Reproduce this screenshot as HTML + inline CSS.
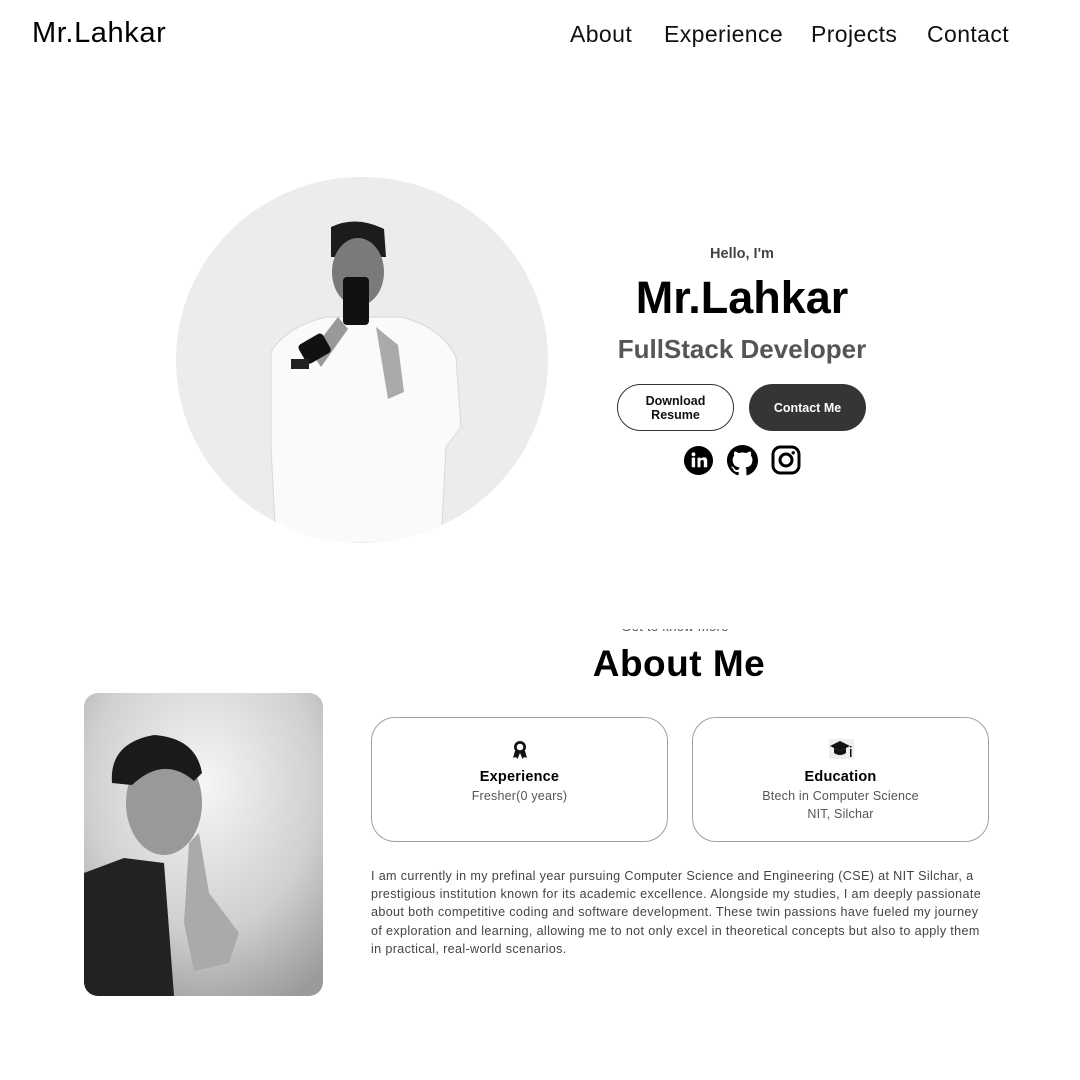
<!DOCTYPE html>
<html><head><meta charset="utf-8"><style>
*{margin:0;padding:0;box-sizing:border-box}
body{width:1080px;height:1080px;background:#fff;font-family:"Liberation Sans",sans-serif;color:#000;position:relative;overflow:hidden}
.abs{position:absolute}
.logo{left:32px;top:17px;font-size:29px;letter-spacing:.6px}
.nav{top:21px;font-size:23px;color:#111;letter-spacing:.4px}
.btn{position:absolute;top:384px;height:47px;width:117px;border-radius:24px;font-size:12.5px;font-weight:bold;display:flex;align-items:center;justify-content:center;text-align:center;line-height:14px}
.card{position:absolute;top:717px;height:125px;width:297px;border:1px solid #a0a0a0;border-radius:24px;text-align:center}
.card h3{font-size:14.5px;font-weight:bold;margin-top:51px;letter-spacing:.2px}
.card p{font-size:12.5px;color:#555;line-height:18px;margin-top:2px;letter-spacing:.2px}
</style></head><body>
<div class="abs logo">Mr.Lahkar</div>
<div class="abs nav" style="left:570px">About</div>
<div class="abs nav" style="left:664px">Experience</div>
<div class="abs nav" style="left:811px">Projects</div>
<div class="abs nav" style="left:927px">Contact</div>

<svg class="abs" style="left:176px;top:177px" width="372" height="366" viewBox="0 0 372 366">
<defs><clipPath id="c"><ellipse cx="186" cy="183" rx="186" ry="183"/></clipPath></defs>
<ellipse cx="186" cy="183" rx="186" ry="183" fill="#ececec"/>
<g clip-path="url(#c)">
<path d="M95 175 Q110 150 150 140 L225 140 Q265 150 280 180 L285 250 L270 270 L265 366 L100 366 L95 270 Z" fill="#fafafa" stroke="#d8d8d8"/>
<path d="M155 50 Q180 38 208 52 L210 80 L155 80 Z" fill="#1c1c1c"/>
<ellipse cx="182" cy="95" rx="26" ry="34" fill="#7a7a7a"/>
<rect x="167" y="100" width="26" height="48" rx="4" fill="#111"/>
<path d="M135 175 L162 140 L172 152 L145 190 Z" fill="#999"/>
<path d="M200 150 L222 168 L228 215 L212 222 Z" fill="#aaa"/>
<rect x="125" y="160" width="28" height="22" rx="4" transform="rotate(-30 140 172)" fill="#111"/>
<rect x="115" y="182" width="18" height="10" fill="#222"/>
</g></svg>

<div class="abs" style="left:0;width:1484px;top:246px;text-align:center;font-size:14.5px;font-weight:bold;color:#444">Hello, I'm</div>
<div class="abs" style="left:0;width:1484px;top:272px;text-align:center;font-size:45px;font-weight:bold">Mr.Lahkar</div>
<div class="abs" style="left:0;width:1484px;top:334px;text-align:center;font-size:26px;font-weight:bold;color:#555">FullStack Developer</div>
<div class="btn" style="left:617px;border:1.5px solid #333;color:#111">Download<br>Resume</div>
<div class="btn" style="left:749px;background:#353535;color:#fff">Contact Me</div>

<svg class="abs" style="left:683px;top:445px" width="31" height="31" viewBox="0 0 32 32"><circle cx="16" cy="16" r="15" fill="#000"/><rect x="9" y="13" width="3.5" height="10" fill="#fff"/><circle cx="10.8" cy="9.6" r="2" fill="#fff"/><path d="M15 13h3.3v1.5c.7-1.2 2-1.8 3.4-1.8 2.6 0 3.3 1.7 3.3 4.2V23h-3.5v-5.5c0-1.3-.4-2.2-1.6-2.2-1.3 0-1.9.9-1.9 2.2V23H15z" fill="#fff"/></svg>
<svg class="abs" style="left:727px;top:445px" width="31" height="31" viewBox="0 0 16 16"><path fill="#000" d="M8 0C3.58 0 0 3.580 0 8c0 3.54 2.29 6.53 5.47 7.590.4.07.55-.17.55-.38v-1.34c-2.230.48-2.7-1.07-2.7-1.07-.36-.92-.89-1.17-.89-1.17-.73-.5.06-.49.06-.49.8.06 1.230.83 1.230.83.72 1.23 1.88.87 2.34.67.07-.52.28-.87.51-1.07-1.78-.2-3.64-.89-3.64-3.95 0-.87.31-1.59.82-2.15-.08-.2-.36-1.02.08-2.12 0 0 .67-.21 2.2.82a7.6 7.6 0 0 1 4 0c1.53-1.04 2.2-.82 2.2-.82.44 1.1.16 1.92.08 2.12.51.56.82 1.27.82 2.15 0 3.07-1.87 3.75-3.65 3.95.29.25.54.73.54 1.48v2.2c0 .21.15.46.55.38A8 8 0 0 0 16 8c0-4.42-3.58-8-8-8z"/></svg>
<svg class="abs" style="left:771px;top:445px" width="30" height="30" viewBox="0 0 30 30"><rect x="2" y="2" width="26" height="26" rx="7.5" fill="none" stroke="#000" stroke-width="3"/><circle cx="15" cy="15" r="6" fill="none" stroke="#000" stroke-width="3"/><circle cx="22.2" cy="7.8" r="1.7" fill="#000"/></svg>

<div class="abs" style="left:0;width:1350px;top:629px;height:6px;overflow:hidden;text-align:center;font-size:13px;color:#555;letter-spacing:.3px"><div style="margin-top:-10px">Get to know more</div></div>
<div class="abs" style="left:0;width:1358px;top:643px;text-align:center;font-size:37px;font-weight:bold;letter-spacing:.5px">About Me</div>

<svg class="abs" style="left:84px;top:693px" width="239" height="303" viewBox="0 0 239 303">
<defs><radialGradient id="g" cx="0.5" cy="0.3" r="0.8"><stop offset="0" stop-color="#f6f6f6"/><stop offset="0.6" stop-color="#d0d0d0"/><stop offset="1" stop-color="#9a9a9a"/></radialGradient><clipPath id="r"><rect width="239" height="303" rx="14"/></clipPath></defs>
<g clip-path="url(#r)"><rect width="239" height="303" fill="url(#g)"/>
<path d="M0 180 L40 165 L80 170 L90 303 L0 303Z" fill="#222"/>
<ellipse cx="80" cy="110" rx="38" ry="52" fill="#999"/>
<path d="M28 90 Q25 50 70 42 Q112 45 118 80 L110 88 Q80 62 48 92 Z" fill="#1a1a1a"/>
<path d="M105 150 L115 140 L125 200 L155 240 L145 270 L110 278 L100 230 Z" fill="#aaa"/>
</g></svg>

<div class="card" style="left:371px"><svg class="abs" style="left:140px;top:22px" width="16" height="20" viewBox="0 0 16 20"><circle cx="8" cy="7" r="6" fill="#111"/><circle cx="8" cy="7" r="3.3" fill="#fff"/><path d="M3 11 L1 18 L4 17 L5.5 19 L8 13 L10.5 19 L12 17 L15 18 L13 11Z" fill="#111"/></svg><h3>Experience</h3><p>Fresher(0 years)</p></div>
<div class="card" style="left:692px"><svg class="abs" style="left:136px;top:21px" width="25" height="20" viewBox="0 0 25 20"><rect width="25" height="20" fill="#eee"/><path d="M1 7 L11 2 L21 7 L11 12Z" fill="#111"/><path d="M5 9 L5 14 Q11 18 17 14 L17 9 L11 12Z" fill="#111"/><rect x="21" y="10" width="1.5" height="8" fill="#111"/><rect x="21" y="7" width="1.5" height="1.5" fill="#111"/></svg><h3>Education</h3><p>Btech in Computer Science<br>NIT, Silchar</p></div>

<div class="abs" style="left:371px;top:867px;width:612px;font-size:12.6px;line-height:18.2px;color:#444;letter-spacing:.35px">I am currently in my prefinal year pursuing Computer Science and Engineering (CSE) at NIT Silchar, a prestigious institution known for its academic excellence. Alongside my studies, I am deeply passionate about both competitive coding and software development. These twin passions have fueled my journey of exploration and learning, allowing me to not only excel in theoretical concepts but also to apply them in practical, real-world scenarios.</div>
</body></html>
